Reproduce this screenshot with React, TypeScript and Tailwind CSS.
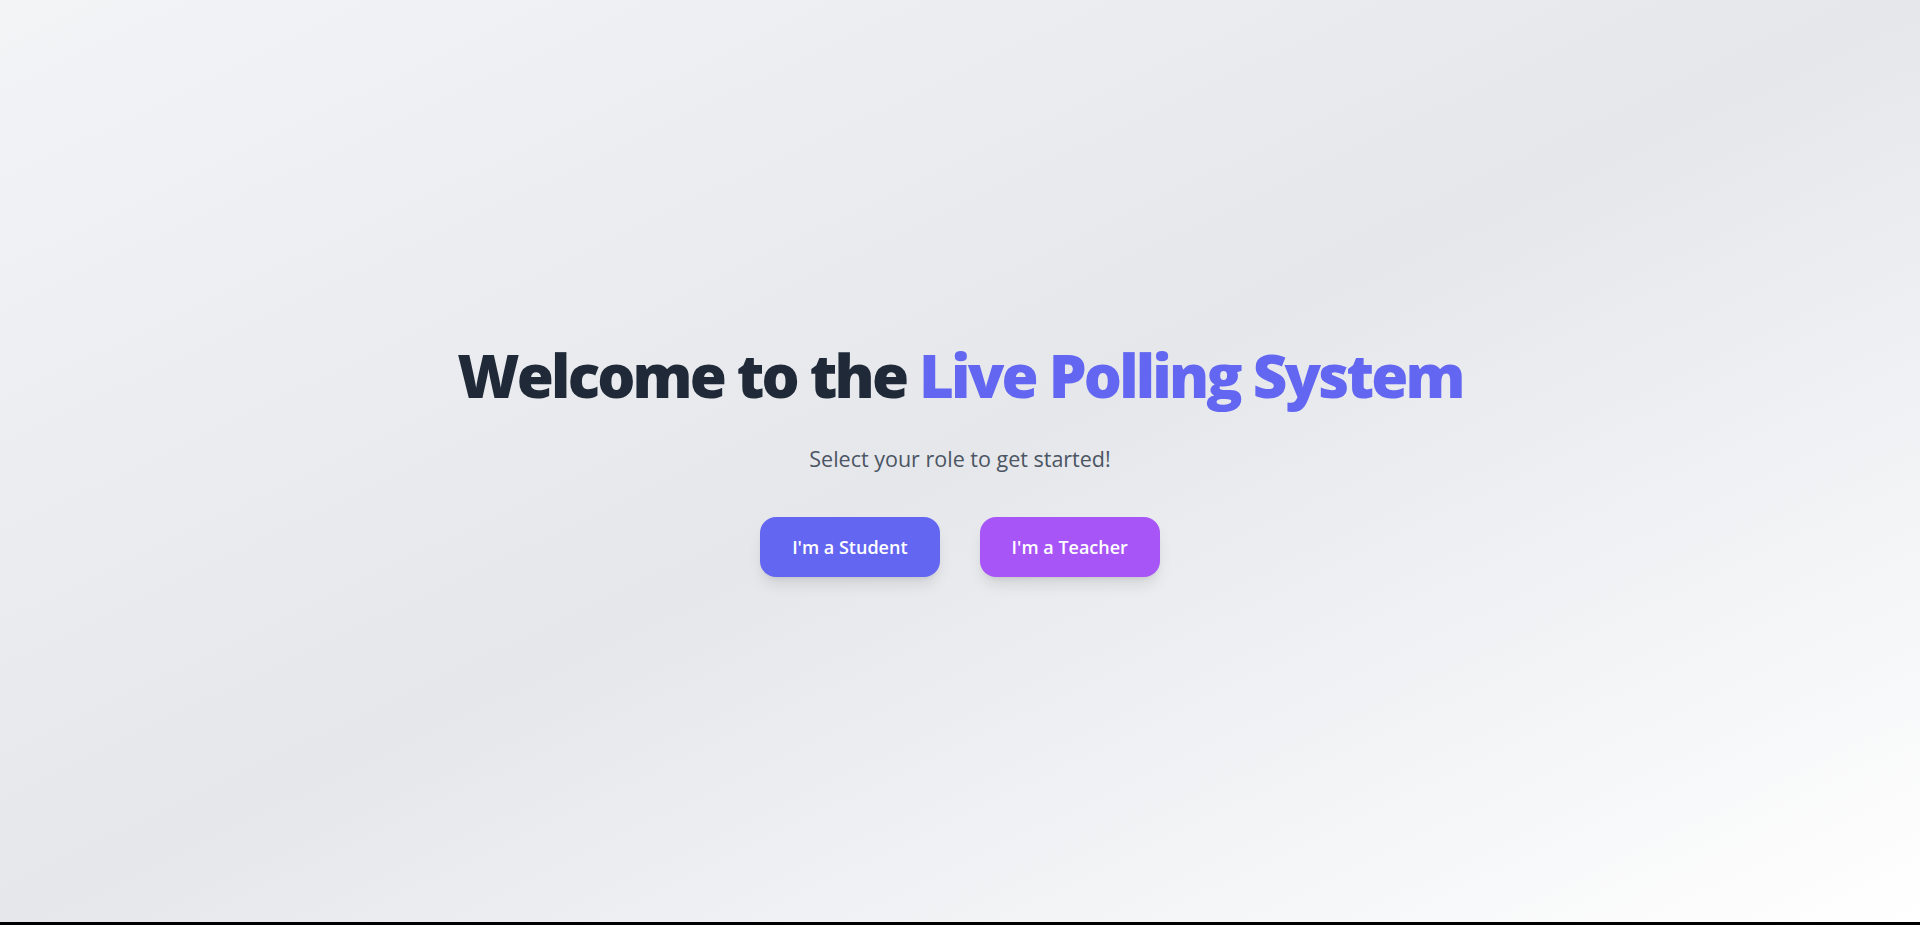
export default function App() {
  return (
    <div className="h-[925px] w-full bg-black">
      <div
        className="flex h-[922px] w-full flex-col items-center justify-center bg-gradient-to-br from-[#f3f4f6] via-[#e5e7eb] to-white"
        style={{ fontFamily: '"Open Sans", "Noto Sans", sans-serif' }}
      >
        {/* Title */}
        <h1 className="mb-10 text-6xl font-extrabold tracking-[-0.047em] text-[#1f2937]">
          Welcome to the <span className="text-[#6366f1]">Live Polling System</span>
        </h1>
        <p className="mb-[44px] text-[21.5px] leading-7 text-[#4b5563]">Select your role to get started!</p>

        {/* Role buttons */}
        <div className="flex gap-10">
          <button className="rounded-2xl bg-[#6366f1] px-8 py-4 text-lg leading-7 font-semibold text-white shadow-lg">
            I'm a Student
          </button>
          <button className="rounded-2xl bg-[#a855f7] px-8 py-4 text-lg leading-7 font-semibold text-white shadow-lg">
            I'm a Teacher
          </button>
        </div>
      </div>
    </div>
  );
}
